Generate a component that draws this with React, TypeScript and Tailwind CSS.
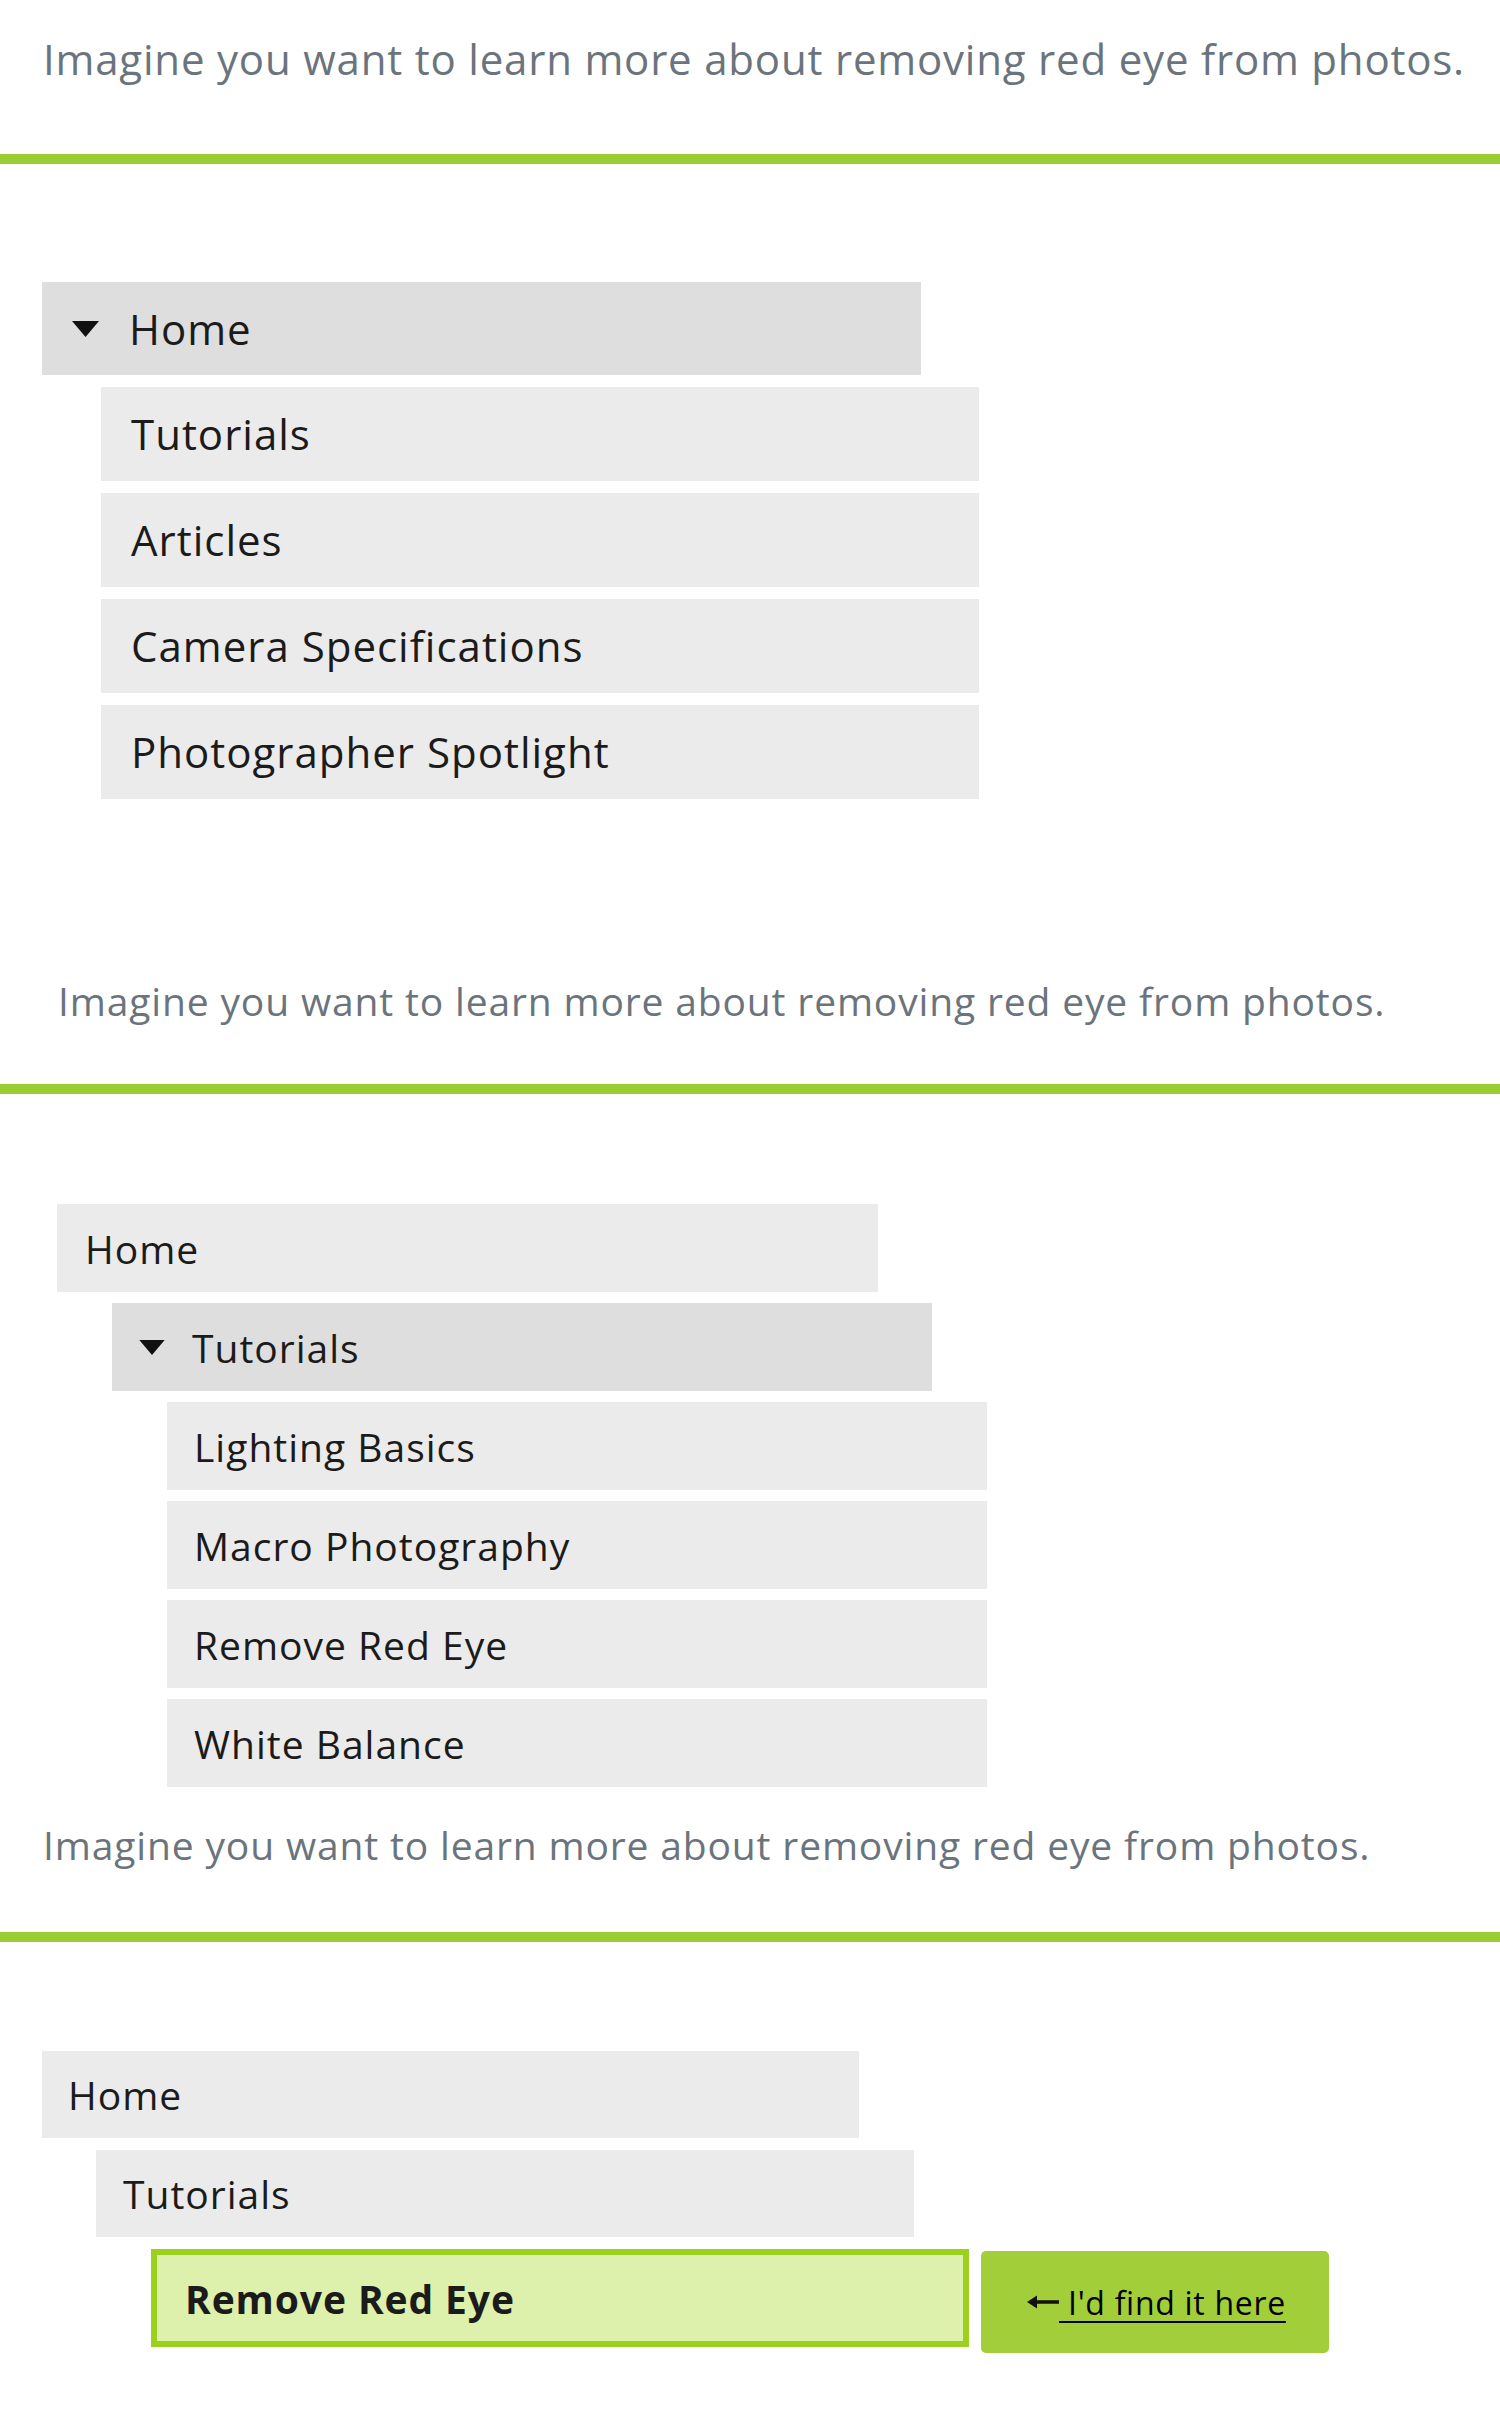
import React from "react";

const font = { fontFamily: "'Open Sans', Lato, sans-serif" };

function Caret({ className }: { className?: string }) {
  return (
    <svg viewBox="0 0 27 16" className={className} aria-hidden>
      <polygon points="0,0 27,0 13.5,16" fill="#111" />
    </svg>
  );
}

function ArrowLeft() {
  return (
    <svg viewBox="0 0 32 16" className="h-[16px] w-[32px]" aria-hidden>
      <line x1="6" y1="8" x2="32" y2="8" stroke="#111" strokeWidth="3.5" />
      <polygon points="0,8 10,1.5 10,14.5" fill="#111" />
    </svg>
  );
}

function Divider({ className }: { className: string }) {
  return <div className={`h-[10px] w-full bg-[#9acd32] ${className}`} />;
}

export default function App() {
  return (
    <div className="w-[1500px] min-h-[2410px] bg-white text-[#1b1b1b] tracking-[1px]" style={font}>
      {/* section 1 */}
      <p className="pl-[43px] pt-[34px] text-[42px] leading-[50px] tracking-[0.8px] text-[#6b747d]">
        Imagine you want to learn more about removing red eye from photos.
      </p>
      <Divider className="mt-[70px]" />

      <ul className="mt-[118px] text-[42px] leading-[50px]">
        <li className="ml-[42px] flex h-[93px] w-[879px] items-center bg-[#dedede] pl-[30px]">
          <Caret className="mr-[30px] h-[16px] w-[27px]" />
          <span>Home</span>
        </li>
        {["Tutorials", "Articles", "Camera Specifications", "Photographer Spotlight"].map((t) => (
          <li
            key={t}
            className="ml-[101px] mt-[12px] flex h-[94px] w-[878px] items-center bg-[#ebebeb] pl-[30px]"
          >
            {t}
          </li>
        ))}
      </ul>

      {/* section 2 */}
      <p className="mt-[178px] pl-[58px] text-[39px] leading-[47px] tracking-[0.85px] text-[#6b747d]">
        Imagine you want to learn more about removing red eye from photos.
      </p>
      <Divider className="mt-[60px]" />

      <ul className="mt-[110px] text-[39px] leading-[47px]">
        <li className="ml-[57px] flex h-[88px] w-[821px] items-center bg-[#ebebeb] pl-[28px]">
          Home
        </li>
        <li className="ml-[112px] mt-[11px] flex h-[88px] w-[820px] items-center bg-[#dedede] pl-[27px]">
          <Caret className="mr-[27px] h-[15px] w-[26px]" />
          <span>Tutorials</span>
        </li>
        {["Lighting Basics", "Macro Photography", "Remove Red Eye", "White Balance"].map((t) => (
          <li
            key={t}
            className="ml-[167px] mt-[11px] flex h-[88px] w-[820px] items-center bg-[#ebebeb] pl-[27px]"
          >
            {t}
          </li>
        ))}
      </ul>

      {/* section 3 */}
      <p className="mt-[34px] pl-[43px] text-[39px] leading-[47px] tracking-[0.85px] text-[#6b747d]">
        Imagine you want to learn more about removing red eye from photos.
      </p>
      <Divider className="mt-[64px]" />

      <ul className="mt-[109px] text-[39px] leading-[47px]">
        <li className="ml-[42px] flex h-[87px] w-[817px] items-center bg-[#ebebeb] pl-[26px]">
          Home
        </li>
        <li className="ml-[96px] mt-[12px] flex h-[87px] w-[818px] items-center bg-[#ebebeb] pl-[27px]">
          Tutorials
        </li>
        <li className="ml-[151px] mt-[12px] flex items-start gap-[12px]">
          <div className="flex h-[98px] w-[818px] items-center border-[6px] border-[#9bd11c] bg-[#def1ac] pl-[28px] font-bold tracking-[0.9px]">
            Remove Red Eye
          </div>
          <a
            href="#"
            className="mt-[2px] flex h-[102px] w-[348px] items-center rounded-[5px] bg-[#a2ce39] pl-[46px] text-[32px] tracking-[0.7px] text-black"
          >
            <ArrowLeft />
            <span className="underline decoration-2 underline-offset-[6px]">&nbsp;I'd find it here</span>
          </a>
        </li>
      </ul>
    </div>
  );
}
